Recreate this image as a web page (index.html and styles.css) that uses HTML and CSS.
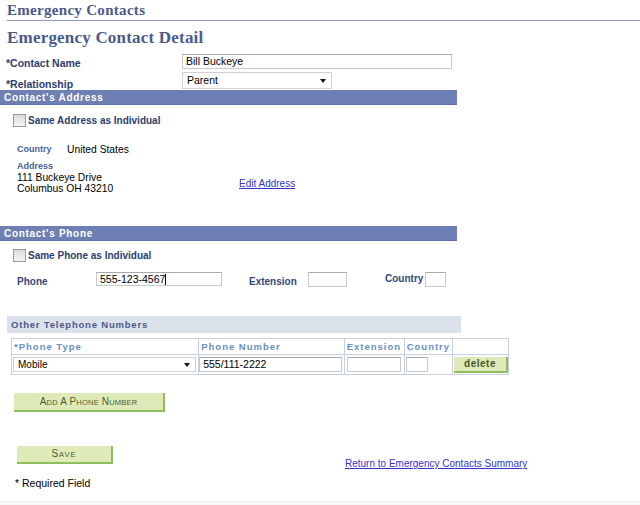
FILE: index.html
```html
<!DOCTYPE html>
<html>
<head>
<meta charset="utf-8">
<link rel="stylesheet" href="styles.css">
</head>
<body>
<div class="page">
  <h1 class="title">Emergency Contacts</h1>
  <h2 class="subtitle">Emergency Contact Detail</h2>

  <div class="frow name-row">
    <span class="flabel">*Contact Name</span>
    <span class="input name-input">Bill Buckeye</span>
  </div>
  <div class="frow rel-row">
    <span class="flabel rel-label">*Relationship</span>
    <span class="select rel-select">Parent<span class="caret"></span></span>
  </div>

  <div class="bar">Contact's Address</div>
  <div class="check-row addr-check">
    <span class="checkbox"></span><span class="clabel">Same Address as Individual</span>
  </div>
  <div class="country-row">
    <span class="slabel">Country</span><span class="value">United States</span>
  </div>
  <div class="addr-block">
    <div class="addr-text">
      <div class="slabel">Address</div>
      <div class="value">111 Buckeye Drive</div>
      <div class="value">Columbus OH 43210</div>
    </div>
    <a class="link edit-link" href="#">Edit Address</a>
  </div>

  <div class="bar phone-bar">Contact's Phone</div>
  <div class="check-row phone-check">
    <span class="checkbox"></span><span class="clabel">Same Phone as Individual</span>
  </div>
  <div class="phone-row">
    <span class="plabel phone-l">Phone</span>
    <span class="input phone-input">555-123-4567<span class="cursor"></span></span>
    <span class="plabel ext-l">Extension</span>
    <span class="input ext-input"></span>
    <span class="plabel country-l">Country</span>
    <span class="input cty-input"></span>
  </div>

  <div class="subbar">Other Telephone Numbers</div>
  <table class="grid">
    <tr class="ghead">
      <th class="c1">*Phone Type</th>
      <th class="c2">Phone Number</th>
      <th class="c3">Extension</th>
      <th class="c4">Country</th>
      <th class="c5"></th>
    </tr>
    <tr class="grow">
      <td><span class="select type-select">Mobile<span class="caret"></span></span></td>
      <td><span class="input num-input">555/111-2222</span></td>
      <td><span class="input gext-input"></span></td>
      <td><span class="input gcty-input"></span></td>
      <td><span class="btn del-btn">delete</span></td>
    </tr>
  </table>

  <div class="btn add-btn">A<span class="sc">DD</span> A P<span class="sc">HONE</span> N<span class="sc">UMBER</span></div>

  <div class="save-row">
    <div class="btn save-btn">S<span class="sc">AVE</span></div>
    <a class="link return-link" href="#">Return to Emergency Contacts Summary</a>
  </div>
  <div class="req">* Required Field</div>
  <div class="footer-strip"></div>
</div>
</body>
</html>
```

FILE: styles.css
```css
html, body {
  margin: 0;
  padding: 0;
  background: #ffffff;
}
.page {
  width: 640px;
  height: 505px;
  position: relative;
  font-family: "Liberation Sans", Arial, sans-serif;
  font-size: 11px;
  color: #000;
  overflow: hidden;
}
.title {
  margin: 0 0 0 7px;
  font-family: "Liberation Serif", "Times New Roman", serif;
  font-weight: bold;
  font-size: 15px;
  line-height: 20px;
  height: 20px;
  color: #4b5a8c;
  letter-spacing: 0.3px;
  border-bottom: 1px solid #8e9ac6;
}
.subtitle {
  margin: 7px 0 0 7px;
  font-family: "Liberation Serif", "Times New Roman", serif;
  font-weight: bold;
  font-size: 17px;
  line-height: 20px;
  height: 20px;
  color: #4b5a8c;
  letter-spacing: 0.2px;
}
.frow {
  display: flex;
  align-items: center;
  margin-left: 6px;
}
.name-row {
  margin-top: 5px;
  height: 16px;
}
.rel-row {
  margin-top: 2px;
  height: 18px;
}
.flabel {
  width: 176px;
  font-weight: bold;
  font-size: 10.5px;
  color: #2d3d6d;
  position: relative;
  top: 2px;
}
.rel-label {
  top: 4px;
}
.input {
  display: inline-block;
  box-sizing: border-box;
  height: 15px;
  border: 1px solid #c9c9c9;
  border-top-color: #a9a9a9;
  background: #fff;
  font-size: 10.5px;
  line-height: 13px;
  padding-left: 3px;
  color: #000;
  vertical-align: middle;
  position: relative;
}
.name-input {
  width: 270px;
}
.select {
  display: inline-flex;
  align-items: center;
  box-sizing: border-box;
  height: 17px;
  border: 1px solid #d0d0d0;
  background: #fff;
  font-size: 10.5px;
  padding-left: 4px;
  position: relative;
}
.rel-select {
  width: 150px;
}
.caret {
  position: absolute;
  right: 5px;
  top: 6px;
  width: 0;
  height: 0;
  border-left: 3.5px solid transparent;
  border-right: 3.5px solid transparent;
  border-top: 4px solid #111;
}
.bar {
  margin-top: 1px;
  width: 457px;
  height: 15px;
  background: #6e7fb3;
  color: #fff;
  font-weight: bold;
  font-size: 10px;
  line-height: 15px;
  padding-left: 4px;
  box-sizing: border-box;
  letter-spacing: 0.7px;
  border-bottom: 1px solid #5f6fa3;
}
.check-row {
  display: flex;
  align-items: center;
  margin-left: 13px;
  height: 14px;
}
.addr-check {
  margin-top: 8px;
}
.checkbox {
  width: 11px;
  height: 11px;
  border: 1px solid #9a9a9a;
  background: linear-gradient(#dcdcdc, #f4f4f4);
  margin-right: 2px;
}
.clabel {
  font-weight: bold;
  font-size: 10px;
  color: #2d3d6d;
}
.country-row {
  margin: 16px 0 0 17px;
  display: flex;
  align-items: center;
  height: 12px;
}
.slabel {
  font-weight: bold;
  font-size: 9px;
  color: #4a5f9a;
  width: 50px;
}
.value {
  font-size: 10.3px;
  line-height: 11px;
}
.addr-block {
  display: flex;
  margin: 6px 0 0 17px;
  height: 35px;
}
.addr-text .slabel {
  line-height: 11px;
  height: 11px;
}
.addr-text {
  width: 222px;
}
.link {
  color: #3333cc;
  font-size: 10px;
  text-decoration: underline;
}
.edit-link {
  margin-top: 17px;
}
.phone-bar {
  margin-top: 30px;
}
.phone-check {
  margin-top: 7px;
}
.phone-row {
  display: flex;
  align-items: center;
  margin: 9px 0 0 17px;
  height: 16px;
}
.plabel {
  font-weight: bold;
  font-size: 10px;
  color: #34477d;
  position: relative;
  top: 2px;
}
.phone-l {
  width: 79px;
}
.phone-input {
  width: 126px;
  height: 14px;
}
.cursor {
  display: inline-block;
  width: 1px;
  height: 11px;
  background: #000;
  vertical-align: -2px;
}
.ext-l {
  margin-left: 27px;
  width: 59px;
}
.ext-input {
  width: 39px;
  height: 15px;
}
.country-l {
  margin-left: 38px;
  width: 40px;
  top: -1px;
}
.cty-input {
  width: 21px;
  height: 15px;
}
.subbar {
  margin: 29px 0 0 7px;
  width: 454px;
  height: 17px;
  background: #dce2ec;
  color: #4b5a8c;
  font-weight: bold;
  font-size: 9.5px;
  line-height: 17px;
  padding-left: 4px;
  box-sizing: border-box;
  letter-spacing: 0.8px;
}
.grid {
  margin: 5px 0 0 11px;
  border-collapse: collapse;
  width: 498px;
}
.grid th, .grid td {
  border: 1px solid #c7d0e2;
  padding: 0;
}
.ghead th {
  height: 15px;
  text-align: left;
  color: #6b8ec3;
  font-weight: bold;
  font-size: 9.5px;
  letter-spacing: 1px;
  padding-left: 2px;
  line-height: 14px;
}
.c1 { width: 185px; }
.c2 { width: 143px; }
.c3 { width: 58px; letter-spacing: 0.9px; }
.c4 { width: 46px; letter-spacing: 0.9px; }
.grow td {
  height: 19px;
}
.type-select {
  width: 183px;
  height: 15px;
  margin-left: 1px;
  font-size: 10px;
}
.type-select .caret {
  top: 5px;
}
.num-input {
  width: 143px;
  margin-left: 0;
}
.gext-input {
  width: 54px;
  margin-left: 2px;
}
.gcty-input {
  width: 22px;
  margin-left: 1px;
}
.btn {
  display: inline-block;
  box-sizing: border-box;
  background: #dfeab9;
  border-right: 2px solid #8fbd5c;
  border-bottom: 2px solid #8fbd5c;
  color: #4d5d33;
  text-align: center;
  font-size: 10px;
}
.del-btn {
  width: 54px;
  height: 16px;
  margin-left: 1px;
  font-weight: bold;
  line-height: 14px;
  letter-spacing: 0.5px;
  color: #3f5a2a;
}
.sc {
  font-size: 7.5px;
}
.add-btn {
  display: block;
  margin: 18px 0 0 14px;
  width: 151px;
  height: 19px;
  line-height: 17px;
  letter-spacing: 0.2px;
}
.save-row {
  display: flex;
  margin: 34px 0 0 17px;
  height: 25px;
}
.save-btn {
  width: 96px;
  height: 18px;
  line-height: 16px;
  letter-spacing: 1px;
}
.return-link {
  margin: 12px 0 0 232px;
}
.req {
  margin: 6px 0 0 15px;
  font-size: 10.5px;
}
.footer-strip {
  position: absolute;
  left: 0;
  bottom: 0;
  width: 640px;
  height: 3px;
  background: #f6f6f6;
  border-top: 1px solid #efefef;
}
```
